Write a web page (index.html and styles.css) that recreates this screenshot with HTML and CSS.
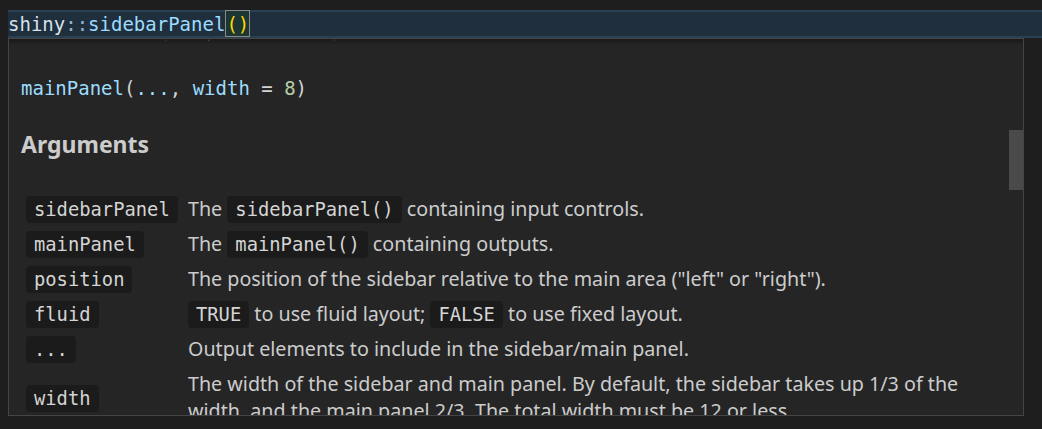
FILE: index.html
```html
<!DOCTYPE html>
<html>
<head>
<meta charset="utf-8">
<link rel="stylesheet" href="styles.css">
</head>
<body>
<div class="editor">
  <div class="line"><span class="ns">shiny</span><span class="op">::</span><span class="fn">sidebarPanel</span><span class="match"><span class="br">(</span><span class="br">)</span></span></div>
  <div class="hover">
    <div class="content">
      <pre class="usage prev"><span class="fn">sidebarPanel</span><span class="pn">(</span><span class="fn">...</span><span class="pn">, </span><span class="fn">width</span><span class="pn"> = </span><span class="num">4</span><span class="pn">)</span></pre>
      <pre class="usage"><span class="fn">mainPanel</span><span class="pn">(</span><span class="fn">...</span><span class="pn">, </span><span class="fn">width</span><span class="pn"> = </span><span class="num">8</span><span class="pn">)</span></pre>
      <h3 class="heading">Arguments</h3>
      <div class="args">
        <div class="name"><code>sidebarPanel</code></div>
        <div class="desc">The <code>sidebarPanel()</code> containing input controls.</div>
        <div class="name"><code>mainPanel</code></div>
        <div class="desc">The <code>mainPanel()</code> containing outputs.</div>
        <div class="name"><code>position</code></div>
        <div class="desc">The position of the sidebar relative to the main area ("left" or "right").</div>
        <div class="name"><code>fluid</code></div>
        <div class="desc"><code>TRUE</code> to use fluid layout; <code>FALSE</code> to use fixed layout.</div>
        <div class="name"><code>...</code></div>
        <div class="desc">Output elements to include in the sidebar/main panel.</div>
        <div class="name"><code>width</code></div>
        <div class="desc">The width of the sidebar and main panel. By default, the sidebar takes up 1/3 of the width, and the main panel 2/3. The total width must be 12 or less.</div>
      </div>
    </div>
    <div class="shadow"></div>
    <div class="thumb"></div>
  </div>
</div>
</body>
</html>
```
FILE: styles.css
```css
html, body {
  margin: 0;
  padding: 0;
  background: #1e1e1e;
  width: 1042px;
  height: 429px;
  overflow: hidden;
}

.editor {
  position: relative;
  height: 429px;
  padding-top: 10px;
  box-sizing: border-box;
}

.line {
  margin-left: 8px;
  height: 24px;
  border-top: 2px solid #2a4151;
  border-bottom: 2px solid #2a4151;
  background: #1f2f3e;
  font-family: "DejaVu Sans Mono", "Liberation Mono", monospace;
  font-size: 19px;
  line-height: 24px;
  white-space: pre;
}

.ns { color: #d6e2ea; }
.op { color: #8fb3c8; }
.fn { color: #9cdcfe; }
.pn { color: #d4d4d4; }
.num { color: #b5cea8; }

.match {
  display: inline-block;
  height: 27px;
  margin-top: -2px;
  vertical-align: top;
  line-height: 27px;
  box-sizing: border-box;
  border: 1px solid #8a8a8a;
  background: #1c3634;
}
.br { color: #ffd700; }

.hover {
  position: absolute;
  left: 8px;
  top: 38px;
  width: 1016px;
  height: 378px;
  box-sizing: border-box;
  border: 1px solid #454545;
  background: #252526;
  overflow: hidden;
  color: #cccccc;
  font-family: "Noto Sans", "Open Sans", sans-serif;
  font-size: 19.7px;
}

.content {
  margin-top: -21px;
  padding: 0 12px;
}

.usage {
  margin: 0;
  font-family: "DejaVu Sans Mono", "Liberation Mono", monospace;
  font-size: 19px;
  line-height: 27px;
}

.usage.prev {
  margin-bottom: 30px;
}

.heading {
  margin: 26px 0 0 0;
  font-size: 23px;
  line-height: 32px;
  font-weight: 700;
  color: #cccccc;
}

.args {
  margin: 31px 0 0 5px;
  display: grid;
  grid-template-columns: 154px 1fr;
  column-gap: 8px;
  align-items: center;
}

.name, .desc {
  padding: 4px 0;
  line-height: 27px;
}

code {
  font-family: "DejaVu Sans Mono", "Liberation Mono", monospace;
  font-size: 18.8px;
  line-height: 18px;
  background: #1b1b1b;
  color: #d4d4d4;
  border-radius: 4px;
  padding: 3px 8px;
}

.shadow {
  position: absolute;
  left: 0;
  right: 0;
  top: 0;
  height: 6px;
  background: linear-gradient(#191919, rgba(25,25,25,0));
}

.thumb {
  position: absolute;
  right: 0;
  top: 91px;
  width: 14px;
  height: 60px;
  background: #4a4a4a;
}
```
